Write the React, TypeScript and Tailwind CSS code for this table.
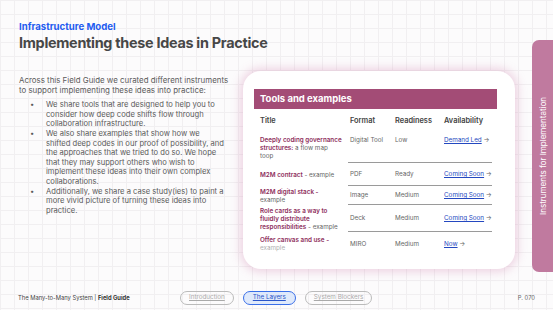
const rows = [
  {
    title: ['Deeply coding governance', 'structures:'],
    rest: ' a flow map',
    after: ['toop'],
    format: 'Digital Tool',
    readiness: 'Low',
    link: 'Demand Led',
    h: 'h-[30px]',
    top: true,
  },
  { title: ['M2M contract'], rest: ' - example', after: [], format: 'PDF', readiness: 'Ready', link: 'Coming Soon', h: 'h-[23px]' },
  { title: ['M2M digital stack -'], rest: '', after: ['example'], format: 'Image', readiness: 'Medium', link: 'Coming Soon', h: 'h-[19px]' },
  {
    title: ['Role cards as a way to', 'fluidly distribute', 'responsibilities'],
    rest: ' - example',
    after: [],
    format: 'Deck',
    readiness: 'Medium',
    link: 'Coming Soon',
    h: 'h-[27px]',
  },
  { title: ['Offer canvas and use -'], rest: '', after: ['example'], format: 'MIRO', readiness: 'Medium', link: 'Now', h: 'h-[24px]', faint: true },
];

const bullets = [
  ['We share tools that are designed to help you to', 'consider how deep code shifts flow through', 'collaboration infrastructure.'],
  [
    'We also share examples that show how we',
    'shifted deep codes in our proof of possibility, and',
    'the approaches that we tried to do so. We hope',
    'that they may support others who wish to',
    'implement these ideas into their own complex',
    'collaborations.',
  ],
  ['Additionally, we share a case study(ies) to paint a', 'more vivid picture of turning these ideas into', 'practice.'],
];

export default function App() {
  return (
    <div className="w-[553px] h-[310px] overflow-hidden flex flex-col bg-[#fcfbfc] bg-[linear-gradient(#f1eff1_1px,transparent_1px),linear-gradient(90deg,#f1eff1_1px,transparent_1px)] bg-[size:14px_14px] font-['Inter',sans-serif]">
      <div className="flex h-[286px]">
        {/* Left column */}
        <div className="flex flex-col w-[532px]">
          <div className="pl-[19px] pt-[21px]">
            <p className="text-[9.6px] leading-[11px] font-bold text-[#1f5cf0]">Infrastructure Model</p>
            <h1 className="mt-[2px] text-[14.4px] leading-[18px] font-bold tracking-[-0.02em] text-[#474747]">
              Implementing these Ideas in Practice
            </h1>
          </div>

          <div className="flex">
            <div className="w-[243px] pl-[19px] pt-[24px] text-[7.6px] leading-[9.6px] text-[#5a5a5a] whitespace-nowrap">
              <p className="text-[7.9px]">
                Across this Field Guide we curated different instruments
                <br />
                to support implementing these ideas into practice:
              </p>
              <ul className="mt-[5px]">
                {bullets.map((b) => (
                  <li key={b[0]} className="flex">
                    <span className="w-[27px] pl-[11px]">•</span>
                    <span>
                      {b.map((l) => (
                        <span key={l} className="block">
                          {l}
                        </span>
                      ))}
                    </span>
                  </li>
                ))}
              </ul>
            </div>

            {/* Card */}
            <div className="mt-[19px] w-[272px] h-[198px] rounded-[18px] bg-white shadow-[0_0_10px_3px_rgba(200,110,160,0.28)] pl-[11px] pr-[18px] pt-[18px]">
              <div className="h-[20px] bg-[#a34c76] flex items-center pl-[6px]">
                <span className="text-[9.5px] font-bold text-white">Tools and examples</span>
              </div>
              <div className="pl-[6px] text-[6.3px] leading-[8px] text-[#666] whitespace-nowrap">
                <div className="flex h-[24px] items-center text-[7.4px] font-semibold text-[#444]">
                  <span className="w-[90px]">Title</span>
                  <span className="w-[45px]">Format</span>
                  <span className="w-[49px]">Readiness</span>
                  <span className="flex-1">Availability</span>
                </div>
                {rows.map((r, i) => (
                  <div key={r.title[0]} className={`flex ${r.h} ${r.top ? 'items-start pt-[3px]' : 'items-center'}`}>
                    <span className="w-[88px]">
                      {r.title.map((t, j) => (
                        <span key={t} className="block">
                          <span className="font-semibold text-[#8e2e5c]">{t}</span>
                          {j === r.title.length - 1 && r.rest}
                        </span>
                      ))}
                      {r.after.map((a) => (
                        <span key={a} className={`block ${r.faint ? 'text-[#b0b0b0]' : ''}`}>
                          {a}
                        </span>
                      ))}
                    </span>
                    <div
                      className={`flex flex-1 mr-[5px] self-stretch ${r.top ? 'items-start' : 'items-center'} ${
                        i < rows.length - 1 ? 'border-b border-[#9a9a9a]' : ''
                      }`}
                    >
                      <span className="w-[47px] pl-[2px]">{r.format}</span>
                      <span className="w-[49px]">{r.readiness}</span>
                      <span className="flex-1">
                        <span className="underline text-[#2448c0]">{r.link}</span> →
                      </span>
                    </div>
                  </div>
                ))}
              </div>
            </div>
          </div>
        </div>

        {/* Right tab */}
        <div className="pt-[40px]">
          <div className="w-[21px] h-[232px] rounded-l-[7px] bg-[#c07a9f] flex items-center justify-center">
            <span className="-rotate-90 whitespace-nowrap text-[8px] text-white">Instruments for Implementation</span>
          </div>
        </div>
      </div>

      {/* Footer */}
      <div className="flex items-center h-[24px] pl-[18px] text-[5.8px] text-[#444]">
        <span className="w-[162px]">
          The Many-to-Many System | <b className="text-[#333]">Field Guide</b>
        </span>
        <div className="flex gap-[9px]">
          <span className="px-[8px] h-[14px] flex items-center rounded-full border border-[#bbb] text-[#aaa] underline text-[6.3px]">
            Introduction
          </span>
          <span className="px-[9px] h-[14px] flex items-center rounded-full border border-[#3a6fe8] bg-[#dfe9fb] text-[#2a55c8] underline text-[6.3px]">
            The Layers
          </span>
          <span className="px-[8px] h-[14px] flex items-center rounded-full border border-[#bbb] text-[#aaa] underline text-[6.3px]">
            System Blockers
          </span>
        </div>
        <span className="ml-auto pr-[18px] text-[#666]">P. 070</span>
      </div>
    </div>
  );
}
